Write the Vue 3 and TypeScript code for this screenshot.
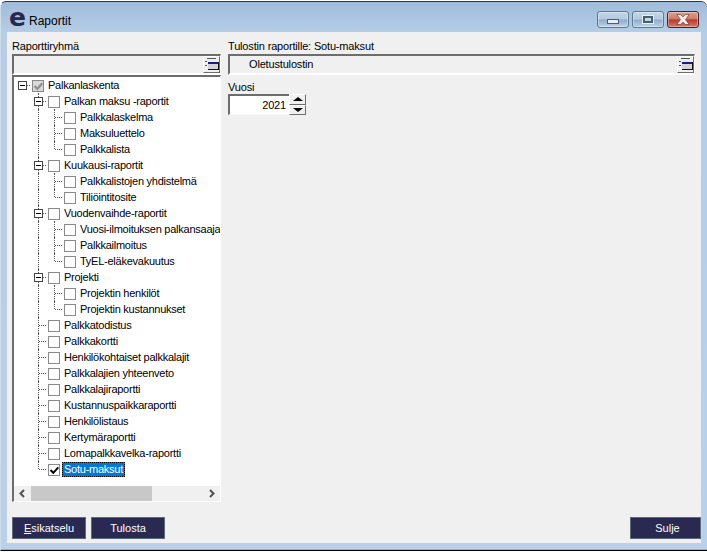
<script setup lang="ts">
interface Row {
  label: string;
  depth: number;
  guides: boolean[];
  last?: boolean;
  expander?: boolean;
  checked?: 'grey' | 'black';
  selected?: boolean;
}

const flat = (label: string, depth: number, opts: Partial<Row> = {}): Row => ({
  label,
  depth,
  guides: depth === 2 ? [false, true] : depth === 1 ? [false] : [],
  ...opts,
});

const rows: Row[] = [
  flat('Palkanlaskenta', 0, { expander: true, checked: 'grey' }),
  flat('Palkan maksu -raportit', 1, { expander: true }),
  flat('Palkkalaskelma', 2),
  flat('Maksuluettelo', 2),
  flat('Palkkalista', 2, { last: true }),
  flat('Kuukausi-raportit', 1, { expander: true }),
  flat('Palkkalistojen yhdistelmä', 2),
  flat('Tiliöintitosite', 2, { last: true }),
  flat('Vuodenvaihde-raportit', 1, { expander: true }),
  flat('Vuosi-ilmoituksen palkansaajaerittely', 2),
  flat('Palkkailmoitus', 2),
  flat('TyEL-eläkevakuutus', 2, { last: true }),
  flat('Projekti', 1, { expander: true }),
  flat('Projektin henkilöt', 2),
  flat('Projektin kustannukset', 2, { last: true }),
  flat('Palkkatodistus', 1),
  flat('Palkkakortti', 1),
  flat('Henkilökohtaiset palkkalajit', 1),
  flat('Palkkalajien yhteenveto', 1),
  flat('Palkkalajiraportti', 1),
  flat('Kustannuspaikkaraportti', 1),
  flat('Henkilölistaus', 1),
  flat('Kertymäraportti', 1),
  flat('Lomapalkkavelka-raportti', 1),
  flat('Sotu-maksut', 1, { last: true, checked: 'black', selected: true }),
];
</script>

<template>
  <div class="screen">
    <div class="window">
      <header class="titlebar">
        <span class="logo">e</span>
        <span class="title">Raportit</span>
        <div class="caption">
          <button class="cap"><i class="min"></i></button>
          <button class="cap"><i class="max"></i></button>
          <button class="cap close">
            <svg width="14" height="11" viewBox="0 0 14 11"><path d="M.8.500h3.700l2.500 2.300 2.500-2.300h3.700l-3.700 5 3.700 5h-3.700l-2.500-2.300-2.500 2.300h-3.700l3.700-5z" fill="#f4ece8" stroke="#6f2a24" stroke-width="0.6"/></svg>
          </button>
        </div>
      </header>

      <main class="client">
        <div class="columns">
          <section class="left">
            <label class="lbl">Raporttiryhmä</label>
            <div class="field">
              <span class="pick">
                <svg width="14" height="13" viewBox="0 0 14 13"><path d="M2 .5h9" stroke="#555"/><path d="M2 1h9v3H2z" fill="#ececec"/><path d="M0 3.500h2M0 7.500h2" stroke="#555"/><path d="M3 4h10v2H3z" fill="#1c1c84"/><path d="M3 6h10v5H3z" fill="#d4d4d4"/><path d="M3 11.500h10.500M13.500 4v8" stroke="#111"/></svg>
              </span>
            </div>
            <div class="tree">
              <div class="tree-body">
                <div v-for="r in rows" :key="r.label" class="row">
                  <span v-for="(g, i) in r.guides" :key="i" class="cell" :class="{ vline: g }"></span>
                  <span
                    class="cell"
                    :class="{
                      node: r.depth > 0,
                      half: r.last && r.depth > 0,
                      stub: true,
                    }"
                  >
                    <span v-if="r.expander" class="exp"><i></i></span>
                  </span>
                  <span class="check" :class="{ grey: r.checked === 'grey' }">
                    <svg v-if="r.checked === 'black'" width="9" height="9" viewBox="0 0 9 9"><path d="M.5 4l2.800 2.800 5-5.500" fill="none" stroke="#000" stroke-width="2"/></svg>
                    <svg v-if="r.checked === 'grey'" width="9" height="9" viewBox="0 0 9 9"><path d="M.5 4l2.800 2.800 5-5.500" fill="none" stroke="#8f8f8f" stroke-width="2.200"/></svg>
                  </span>
                  <span class="text" :class="{ selected: r.selected }">{{ r.label }}</span>
                </div>
              </div>
              <div class="hscroll">
                <svg class="arr" width="9" height="9" viewBox="0 0 9 9"><path d="M6 1L2.500 4.500 6 8" fill="none" stroke="#505050" stroke-width="2"/></svg>
                <span class="track"><span class="thumb"></span></span>
                <svg class="arr" width="9" height="9" viewBox="0 0 9 9"><path d="M3 1l3.500 3.500L3 8" fill="none" stroke="#505050" stroke-width="2"/></svg>
              </div>
            </div>
          </section>

          <section class="right">
            <label class="lbl">Tulostin raportille: Sotu-maksut</label>
            <div class="field printer">
              <span class="value">Oletustulostin</span>
              <span class="pick">
                <svg width="14" height="13" viewBox="0 0 14 13"><path d="M2 .5h9" stroke="#555"/><path d="M2 1h9v3H2z" fill="#ececec"/><path d="M0 3.500h2M0 7.500h2" stroke="#555"/><path d="M3 4h10v2H3z" fill="#1c1c84"/><path d="M3 6h10v5H3z" fill="#d4d4d4"/><path d="M3 11.500h10.500M13.500 4v8" stroke="#111"/></svg>
              </span>
            </div>
            <label class="lbl year-lbl">Vuosi</label>
            <div class="spin">
              <div class="year">2021</div>
              <div class="spin-btns">
                <span class="sb"><i class="up"></i></span>
                <span class="sb"><i class="down"></i></span>
              </div>
            </div>
          </section>
        </div>

        <footer class="actions">
          <button class="btn"><u>E</u>sikatselu</button>
          <button class="btn">Tulosta</button>
          <button class="btn sulje">Sulje</button>
        </footer>
      </main>
    </div>
  </div>
</template>

<style>
html, body { margin: 0; background: #fff; }
</style>

<style scoped>
.screen {
  width: 707px;
  height: 552px;
  overflow: hidden;
  background: #fff;
  font: 11px "Liberation Sans", Arial, sans-serif;
  letter-spacing: -0.17px;
  color: #000;
}
.window {
  box-sizing: border-box;
  width: 707px;
  height: 550px;
  margin-top: 1px;
  padding: 0 6px 7px 7px;
  display: flex;
  flex-direction: column;
  border-top: 1px solid #333;
  border-bottom: 1px solid #000;
  border-left: 1px solid #cfdcea;
  border-radius: 6px 6px 0 0;
  background: linear-gradient(#9fbcda 0, #b5cde6 30px, #b9d1ea 100%);
  box-shadow: inset 0 -1px 0 #5cc3e6;
}
.titlebar {
  height: 30px;
  flex: none;
  display: flex;
  align-items: flex-start;
  margin-left: -1px;
}
.logo {
  font: bold 25px/25px "DejaVu Sans", sans-serif;
  color: #28284f;
  width: 20px;
  margin: 3px 0 0 2px;
  letter-spacing: 0;
}
.title { font-size: 12px; letter-spacing: 0; margin-top: 12px; }
.caption {
  margin: 9px 2px 0 auto;
  display: flex;
  gap: 3px;
}
.cap {
  box-sizing: border-box;
  width: 32px;
  height: 17px;
  padding: 0;
  display: flex;
  align-items: center;
  justify-content: center;
  border: 1px solid #5f7690;
  border-radius: 3px;
  background: linear-gradient(#c4d7ea 0, #b2c9e1 48%, #8eabc9 52%, #bcd2e8 100%);
  box-shadow: inset 0 0 0 1px rgba(255,255,255,.35);
}
.cap.close {
  border-color: #5b1a22;
  background: linear-gradient(#dba193 0, #cf7a69 46%, #b83a2c 52%, #d17a66 100%);
}
.min { width: 10px; height: 3px; background: #e9eef3; border: 1px solid #4b5d70; margin-top: 3px; }
.max { width: 6px; height: 3px; background: #c6d6e6; border: 2px solid #4b5d70; outline: 1px solid #e9eef3; }
.client {
  flex: 1;
  min-height: 0;
  background: #f0f0f0;
  display: flex;
  flex-direction: column;
  padding: 0 0 4px 5px;
  margin-left: -1px;
}
.columns { flex: 1; display: flex; min-height: 0; padding-top: 8px; gap: 7px; }
.left { width: 209px; flex: none; display: flex; flex-direction: column; }
.right { flex: 1; padding-right: 6px; display: flex; flex-direction: column; }
.lbl { height: 14px; line-height: 13px; }
.field {
  box-sizing: border-box;
  height: 21px;
  flex: none;
  border-top: 2px solid #6d6d6d;
  border-left: 2px solid #6d6d6d;
  border-right: 1px solid #fff;
  border-bottom: 2px solid #fff;
  background: #f0f0f0;
  display: flex;
  align-items: center;
  justify-content: space-between;
}
.pick {
  box-sizing: border-box;
  width: 17px;
  height: 17px;
  margin-left: auto;
  display: flex;
  align-items: center;
  justify-content: center;
  background: #f0f0f0;
  border: 1px solid;
  border-color: #fff #6d6d6d #6d6d6d #fff;
}
.value { padding-left: 19px; margin-top: -2px; }
.tree {
  box-sizing: border-box;
  height: 427px;
  flex: none;
  background: #fff;
  border-top: 2px solid #6d6d6d;
  border-left: 2px solid #6d6d6d;
  border-right: 1px solid #fff;
  border-bottom: 1px solid #fff;
  display: flex;
  flex-direction: column;
}
.tree-body { flex: 1; overflow: hidden; letter-spacing: -0.25px; }
.row { display: flex; height: 16px; align-items: center; white-space: nowrap; }
.cell {
  position: relative;
  flex: none;
  width: 16px;
  height: 16px;
}
.vline::before, .node::before {
  content: '';
  position: absolute;
  left: 8px;
  top: 0;
  bottom: 0;
  border-left: 1px dotted #555;
}
.half::before { bottom: 8px; }
.stub::after {
  content: '';
  position: absolute;
  left: 9px;
  width: 7px;
  top: 8px;
  border-top: 1px dotted #555;
}
.exp {
  position: absolute;
  z-index: 1;
  left: 4px;
  top: 4px;
  width: 9px;
  height: 9px;
  box-sizing: border-box;
  border: 1px solid #444;
  background: #fff;
}
.exp i { position: absolute; left: 1px; top: 3px; width: 5px; height: 1px; background: #000; }
.check {
  box-sizing: border-box;
  flex: none;
  width: 12px;
  height: 12px;
  margin: 2px 0 0 2px;
  border: 1px solid #8a8a8a;
  background: #fff;
  display: flex;
  align-items: center;
  justify-content: center;
}
.check.grey { background: #d8d8d8; }
.text { margin-left: 2px; padding: 0 2px; height: 15px; line-height: 15px; }
.text.selected {
  background: #0078d7;
  color: #fff;
  outline: 1px dotted #000;
  outline-offset: -1px;
}
.hscroll {
  flex: none;
  height: 15px;
  background: #f0f0f0;
  display: flex;
  align-items: center;
}
.arr { flex: none; width: 17px; }
.track { flex: 1; height: 15px; }
.thumb { display: block; width: 121px; height: 15px; background: #c8c8c8; }
.year-lbl { margin-top: 6px; }
.spin { display: flex; width: 79px; height: 22px; margin-top: -1px; }
.year {
  box-sizing: border-box;
  width: 61px;
  height: 21px;
  background: #fff;
  border-top: 2px solid #6d6d6d;
  border-left: 2px solid #6d6d6d;
  border-bottom: 1px solid #f8f8f8;
  text-align: right;
  line-height: 18px;
  padding-right: 3px;
}
.spin-btns { display: flex; flex-direction: column; width: 17px; height: 21px; }
.sb {
  flex: 1;
  box-sizing: border-box;
  background: #f0f0f0;
  border: 1px solid;
  border-color: #fff #6d6d6d #6d6d6d #fff;
  display: flex;
  align-items: center;
  justify-content: center;
}
.up { width: 0; height: 0; border: 5px solid transparent; border-top: 0; border-bottom: 4px solid #000; }
.down { width: 0; height: 0; border: 5px solid transparent; border-bottom: 0; border-top: 4px solid #000; }
.actions { flex: none; height: 22px; display: flex; gap: 5px; margin-top: 15px; }
.btn {
  box-sizing: border-box;
  width: 74px;
  height: 22px;
  padding: 0;
  background: #2a2952;
  color: #fff;
  font: 11px "Liberation Sans", Arial, sans-serif;
  border: 1px solid #5c6b78;
}
.sulje { margin-left: auto; width: 71px; padding-left: 4px; }
</style>
